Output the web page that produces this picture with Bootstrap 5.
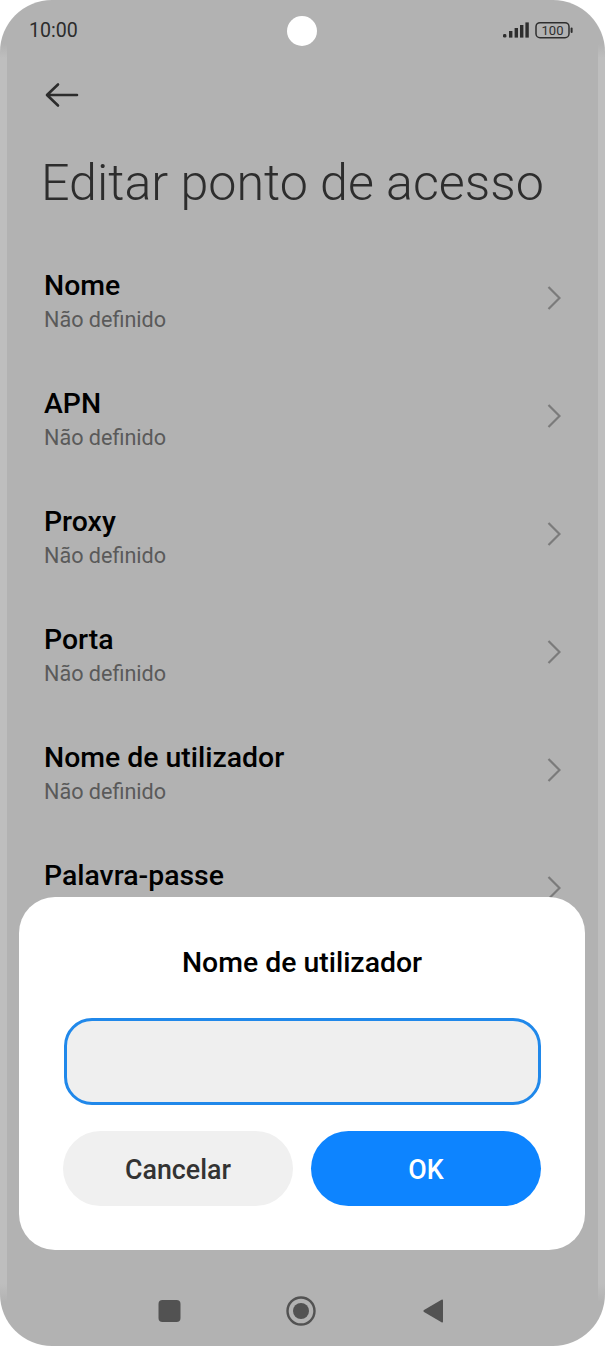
<!DOCTYPE html>
<html lang="pt">
<head>
<meta charset="utf-8">
<title>Editar ponto de acesso</title>
<link href="https://cdn.jsdelivr.net/npm/bootstrap@5.3.0/dist/css/bootstrap.min.css" rel="stylesheet">
<style>
html,body{margin:0;height:100%;background:#fff;font-family:Roboto,"Liberation Sans",sans-serif}
.phone{width:605px;height:1346px;border-radius:52px;overflow:hidden;position:relative;background-color:#b2b2b2;
 background-image:linear-gradient(#b2b2b2,#bebebe 14px,#bebebe 1240px,#b2b2b2),linear-gradient(#b2b2b2,#bebebe 14px,#bebebe 1240px,#b2b2b2);background-size:7px 1258px,7px 1258px;background-position:0 44px,598px 44px;background-repeat:no-repeat}
.sbar{height:62px;padding:0 31px 0 29px}
.clock{font-size:19.6px;color:#2c2c2c;line-height:62px}
.camera{width:30px;height:30px;border-radius:50%;background:#fff;position:absolute;left:287px;top:16px}
.backrow{height:65px;padding-left:45px}
.pagetitle{font-size:50.2px;font-weight:300;color:#2d2d2d;margin:27px 0 0 41px;line-height:57px}
.rowlist{margin-top:58px}
.rowitem{height:118px;padding:0 44px}
.rowname{font-size:28.4px;font-weight:500;color:#000;line-height:34px;margin:0}
.rowsub{font-size:21.6px;color:#5a5a5a;line-height:33px;margin:0}
.chev{margin-top:16px}
.dialogbox{position:absolute;left:19px;top:897px;width:566px;height:353px;background:#fff;border-radius:36px;padding:0 44px}
.dlgtitle{font-size:28.4px;font-weight:500;color:#000;text-align:center;line-height:34px;margin:49px 0 38px}
.dlgfield{display:block;width:477px;margin-left:1px;height:87px;background:#efefef;border:3px solid #2088ea;border-radius:28px}
.dlgbtn{width:230px;height:75px;border:0;border-radius:38px;font-size:26.8px;font-weight:500;line-height:1;padding-top:10px}
.btn-cancel{background:#f0f0f0;color:#333}
.btn-ok{background:#0d84ff;color:#fff}
.dlgactions{margin-top:26px}
.navrow{position:absolute;left:0;right:0;top:1296px;height:30px}
</style>
</head>
<body>
<div class="phone">
  <div class="sbar d-flex justify-content-between align-items-center">
    <span class="clock">10:00</span>
    <svg width="71" height="20" viewBox="0 0 71 20" fill="none">
      <g fill="#2e2e2e">
        <rect x="0" y="13" width="3.4" height="3.6" rx="1.4"/>
        <rect x="6" y="10" width="3.4" height="6.6"/>
        <rect x="11.6" y="7" width="3.4" height="9.6"/>
        <rect x="17" y="4" width="3.4" height="12.6"/>
        <rect x="22.4" y="1.4" width="3.4" height="15.2"/>
      </g>
      <rect x="33" y="1.7" width="33" height="15" rx="4" stroke="#2e2e2e" stroke-width="1.5"/>
      <rect x="67.6" y="6.5" width="2" height="5.4" rx="1" fill="#2e2e2e"/>
      <text x="49.5" y="14" text-anchor="middle" font-family="Roboto,sans-serif" font-size="13" fill="#2e2e2e">100</text>
    </svg>
  </div>
  <div class="camera"></div>
  <div class="backrow d-flex align-items-center">
    <svg width="34" height="26" viewBox="0 0 34 26" fill="none" stroke="#2c2c2c" stroke-width="2.6" stroke-linecap="round" stroke-linejoin="round">
      <path d="M32 13H2.5M13 2.5 2 13l11 10.5"/>
    </svg>
  </div>
  <h1 class="pagetitle">Editar ponto de acesso</h1>
  <div class="rowlist">
    <div class="rowitem d-flex justify-content-between">
      <div><p class="rowname">Nome</p><p class="rowsub">Não definido</p></div>
      <svg class="chev" width="14" height="26" viewBox="0 0 14 26" fill="none" stroke="#7b7b7b" stroke-width="2.2"><path d="M1.5 2 12.5 13 1.5 24"/></svg>
    </div>
    <div class="rowitem d-flex justify-content-between">
      <div><p class="rowname">APN</p><p class="rowsub">Não definido</p></div>
      <svg class="chev" width="14" height="26" viewBox="0 0 14 26" fill="none" stroke="#7b7b7b" stroke-width="2.2"><path d="M1.5 2 12.5 13 1.5 24"/></svg>
    </div>
    <div class="rowitem d-flex justify-content-between">
      <div><p class="rowname">Proxy</p><p class="rowsub">Não definido</p></div>
      <svg class="chev" width="14" height="26" viewBox="0 0 14 26" fill="none" stroke="#7b7b7b" stroke-width="2.2"><path d="M1.5 2 12.5 13 1.5 24"/></svg>
    </div>
    <div class="rowitem d-flex justify-content-between">
      <div><p class="rowname">Porta</p><p class="rowsub">Não definido</p></div>
      <svg class="chev" width="14" height="26" viewBox="0 0 14 26" fill="none" stroke="#7b7b7b" stroke-width="2.2"><path d="M1.5 2 12.5 13 1.5 24"/></svg>
    </div>
    <div class="rowitem d-flex justify-content-between">
      <div><p class="rowname">Nome de utilizador</p><p class="rowsub">Não definido</p></div>
      <svg class="chev" width="14" height="26" viewBox="0 0 14 26" fill="none" stroke="#7b7b7b" stroke-width="2.2"><path d="M1.5 2 12.5 13 1.5 24"/></svg>
    </div>
    <div class="rowitem d-flex justify-content-between">
      <div><p class="rowname">Palavra-passe</p></div>
      <svg class="chev" width="14" height="26" viewBox="0 0 14 26" fill="none" stroke="#7b7b7b" stroke-width="2.2"><path d="M1.5 2 12.5 13 1.5 24"/></svg>
    </div>
  </div>

  <div class="dialogbox">
    <p class="dlgtitle">Nome de utilizador</p>
    <input class="dlgfield" type="text" aria-label="Nome de utilizador">
    <div class="dlgactions d-flex justify-content-between">
      <button class="btn dlgbtn btn-cancel" type="button">Cancelar</button>
      <button class="btn dlgbtn btn-ok" type="button">OK</button>
    </div>
  </div>

  <svg class="navrow" width="605" height="30" viewBox="0 0 605 30" fill="#525252">
    <rect x="158.5" y="4" width="22" height="22" rx="4"/>
    <circle cx="301" cy="15" r="13.5" fill="none" stroke="#525252" stroke-width="2.4"/>
    <circle cx="301" cy="15" r="8"/>
    <path d="M443 4.5v21a1 1 0 0 1-1.5.8L424 16a1.2 1.2 0 0 1 0-2l17.5-10.3a1 1 0 0 1 1.5.8z"/>
  </svg>
</div>
<script src="https://cdn.jsdelivr.net/npm/bootstrap@5.3.0/dist/js/bootstrap.bundle.min.js"></script>
</body>
</html>
